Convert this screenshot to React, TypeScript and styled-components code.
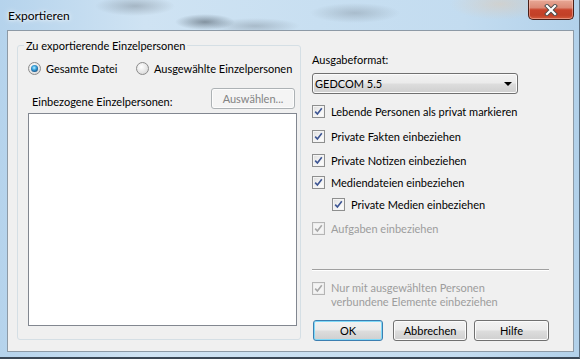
import React from 'react';
import styled, { createGlobalStyle } from 'styled-components';

const Global = createGlobalStyle`
  html, body { margin: 0; padding: 0; background: #ffffff; }
  body { font-family: Lato, "Liberation Sans", sans-serif; font-size: 11px; color: #000; }
  * { box-sizing: border-box; }
`;

const Window = styled.div`
  width: 580px;
  height: 359px;
  display: flex;
  flex-direction: column;
  overflow: hidden;
  border-right: 1px solid #5d6f80;
  border-bottom: 2px solid #3b4856;
  background:
    radial-gradient(ellipse 40px 10px at 135px 6px, rgba(90, 100, 110, 0.35), transparent),
    radial-gradient(ellipse 30px 8px at 205px 22px, rgba(40, 50, 60, 0.45), transparent),
    radial-gradient(ellipse 45px 8px at 255px 26px, rgba(90, 100, 110, 0.3), transparent),
    radial-gradient(ellipse 45px 10px at 355px 13px, rgba(100, 110, 120, 0.3), transparent),
    radial-gradient(ellipse 50px 16px at 500px 4px, rgba(230, 200, 170, 0.45), transparent),
    linear-gradient(90deg, #b5d3ec 0%, #cfe3f3 25%, #c8dff1 55%, #c3dcf0 80%, #b2d1ea 100%);
`;

const TitleBar = styled.div`
  height: 30px;
  flex: none;
  display: flex;
  align-items: flex-start;
  justify-content: space-between;
  padding-left: 8px;
  padding-right: 5px;
`;

const Title = styled.span`
  margin-top: 8px;
  font-size: 12px;
  line-height: 15px;
  color: #000;
  text-shadow: 0 0 6px rgba(255, 255, 255, 0.95), 0 0 3px rgba(255, 255, 255, 0.9);
`;

const CloseButton = styled.div`
  width: 46px;
  height: 20px;
  border: 1px solid #4a1f18;
  border-top: none;
  border-radius: 0 0 5px 5px;
  background: linear-gradient(180deg, #e7a896 0%, #dc8a76 40%, #c8432b 52%, #c24027 80%, #d35b3c 100%);
  box-shadow: inset 0 0 0 1px rgba(255, 210, 200, 0.45);
  display: flex;
  align-items: center;
  justify-content: center;
`;

const Panel = styled.div`
  margin-left: 7px;
  width: 567px;
  height: 322px;
  flex: none;
  border: 1px solid #8d9aa6;
  background: #f0f0f0;
  display: flex;
  padding: 7px 24px 10px 9px;
`;

const GroupBox = styled.fieldset`
  margin: 0 0 1px 0;
  width: 284px;
  min-width: 0;
  flex: none;
  border: 1px solid #d5dfe5;
  border-radius: 3px;
  padding: 0 3px 13px 10px;
  display: flex;
  flex-direction: column;
`;

const GroupLegend = styled.legend`
  padding: 0 2px;
  margin-left: -4px;
  line-height: 15px;
`;

const RadioRow = styled.div`
  margin-top: 8px;
  display: grid;
  grid-template-columns: 108px auto;
  height: 15px;
`;

const RadioOption = styled.label`
  display: flex;
  align-items: center;
  gap: 5px;
  line-height: 15px;
  white-space: nowrap;
`;

const RadioCircle = styled.span<{ $checked?: boolean }>`
  width: 13px;
  height: 13px;
  border-radius: 50%;
  border: 1px solid #8b8b8b;
  background: radial-gradient(circle at 40% 35%, #ffffff 0%, #e6e6e6 55%, #cfcfcf 100%);
  display: flex;
  align-items: center;
  justify-content: center;
  flex: none;
  &::after {
    content: '';
    display: ${(p) => (p.$checked ? 'block' : 'none')};
    width: 7px;
    height: 7px;
    border-radius: 50%;
    background: radial-gradient(circle at 45% 40%, #bff0ff 0%, #3da7e0 35%, #135288 75%, #0c355c 100%);
  }
`;

const ListHeader = styled.div`
  margin-top: 12px;
  display: flex;
  justify-content: space-between;
  align-items: flex-end;
`;

const FieldLabel = styled.span<{ $indent?: number }>`
  padding-left: ${(p) => p.$indent ?? 0}px;
  line-height: 15px;
  white-space: nowrap;
`;

const PushButton = styled.button<{ $width: number; $default?: boolean }>`
  width: ${(p) => p.$width}px;
  height: 21px;
  padding: 0;
  font: inherit;
  font-size: 11px;
  line-height: 15px;
  color: #000;
  border: 1px solid ${(p) => (p.$default ? '#3c7fb1' : '#707070')};
  border-radius: 3px;
  background: linear-gradient(180deg, #f2f2f2 0%, #ebebeb 48%, #dddddd 52%, #cfcfcf 100%);
  box-shadow: inset 0 0 0 1px ${(p) => (p.$default ? '#7fd9f8' : '#fbfbfb')};
  &:disabled {
    color: #838383;
    border-color: #adb2b5;
    background: #f4f4f4;
    box-shadow: inset 0 0 0 1px #fcfcfc;
  }
`;

const ListBox = styled.div`
  margin-top: 4px;
  flex: 1;
  border: 1px solid #828790;
  background: #ffffff;
`;

const RightColumn = styled.div`
  margin-left: 11px;
  width: 237px;
  flex: none;
  display: flex;
  flex-direction: column;
  padding-top: 14px;
`;

const ComboBox = styled.div`
  margin-top: 6px;
  width: 206px;
  height: 21px;
  border: 1px solid #707070;
  border-radius: 3px;
  background: linear-gradient(180deg, #f2f2f2 0%, #ebebeb 48%, #dddddd 52%, #cfcfcf 100%);
  box-shadow: inset 0 0 0 1px #fbfbfb;
  display: flex;
  align-items: center;
  justify-content: space-between;
  padding: 0 5px 0 2px;
  line-height: 15px;
`;

const ComboArrow = styled.span`
  width: 0;
  height: 0;
  border-left: 4px solid transparent;
  border-right: 4px solid transparent;
  border-top: 4px solid #000;
`;

const CheckRow = styled.label<{ $gap: number; $indent?: number; $disabled?: boolean }>`
  margin-top: ${(p) => p.$gap}px;
  margin-left: ${(p) => p.$indent ?? 0}px;
  display: flex;
  align-items: flex-start;
  gap: 6px;
  line-height: 15px;
  color: ${(p) => (p.$disabled ? '#9d9d9d' : '#000')};
`;

const CheckText = styled.span<{ $lines?: boolean }>`
  line-height: ${(p) => (p.$lines ? '14px' : '15px')};
`;

const CheckBoxFrame = styled.span<{ $disabled?: boolean }>`
  margin-top: 1px;
  width: 13px;
  height: 13px;
  flex: none;
  border: 1px solid ${(p) => (p.$disabled ? '#b5b5b5' : '#8e8f8f')};
  background: ${(p) =>
    p.$disabled
      ? '#f4f4f4'
      : 'linear-gradient(135deg, #dcdcdc 0%, #f0f0f0 45%, #ffffff 100%)'};
  box-shadow: inset 0 0 0 1px ${(p) => (p.$disabled ? '#ececec' : '#f4f4f4')};
  display: flex;
  align-items: center;
  justify-content: center;
`;

const Footer = styled.div`
  margin-top: auto;
  display: flex;
  flex-direction: column;
`;

const Separator = styled.div`
  height: 1px;
  background: #a0a0a0;
  box-shadow: 0 1px 0 #ffffff;
`;

const ButtonRow = styled.div`
  margin-top: 11px;
  display: flex;
  padding-left: 1px;
`;

const ButtonSlot = styled.div<{ $gap: number; $right?: number }>`
  margin-left: ${(p) => p.$gap}px;
  margin-right: ${(p) => p.$right ?? 0}px;
`;

function CheckBox({ disabled }: { disabled?: boolean }) {
  return (
    <CheckBoxFrame $disabled={disabled}>
      <svg width="9" height="9" viewBox="0 0 9 9">
        <path
          d="M1.2 4.6 L3.4 7 L7.8 1.3"
          fill="none"
          stroke={disabled ? '#a8a8a8' : '#3d5593'}
          strokeWidth="1.6"
        />
      </svg>
    </CheckBoxFrame>
  );
}

function Check({
  children,
  gap,
  indent,
  disabled,
  lines,
}: {
  children: React.ReactNode;
  gap: number;
  indent?: number;
  disabled?: boolean;
  lines?: boolean;
}) {
  return (
    <CheckRow $gap={gap} $indent={indent} $disabled={disabled}>
      <CheckBox disabled={disabled} />
      <CheckText $lines={lines}>{children}</CheckText>
    </CheckRow>
  );
}

export default function App() {
  return (
    <>
      <Global />
      <Window>
        <TitleBar>
          <Title>Exportieren</Title>
          <CloseButton>
            <svg width="14" height="12" viewBox="0 0 14 12">
              <path d="M3 2 L11 10 M11 2 L3 10" stroke="#4b4b4b" strokeWidth="4" strokeLinecap="square" />
              <path d="M3 2 L11 10 M11 2 L3 10" stroke="#ffffff" strokeWidth="2.2" strokeLinecap="square" />
            </svg>
          </CloseButton>
        </TitleBar>
        <Panel>
          <GroupBox>
            <GroupLegend>Zu exportierende Einzelpersonen</GroupLegend>
            <RadioRow>
              <RadioOption>
                <RadioCircle $checked />
                Gesamte Datei
              </RadioOption>
              <RadioOption>
                <RadioCircle />
                Ausgewählte Einzelpersonen
              </RadioOption>
            </RadioRow>
            <ListHeader>
              <FieldLabel $indent={4}>Einbezogene Einzelpersonen:</FieldLabel>
              <ButtonSlot $gap={0} $right={2}>
                <PushButton $width={84} disabled>
                  Auswählen...
                </PushButton>
              </ButtonSlot>
            </ListHeader>
            <ListBox />
          </GroupBox>
          <RightColumn>
            <FieldLabel>Ausgabeformat:</FieldLabel>
            <ComboBox>
              <span>GEDCOM 5.5</span>
              <ComboArrow />
            </ComboBox>
            <Check gap={10}>Lebende Personen als privat markieren</Check>
            <Check gap={10}>Private Fakten einbeziehen</Check>
            <Check gap={9}>Private Notizen einbeziehen</Check>
            <Check gap={7}>Mediendateien einbeziehen</Check>
            <Check gap={7} indent={20}>
              Private Medien einbeziehen
            </Check>
            <Check gap={9} disabled>
              Aufgaben einbeziehen
            </Check>
            <Footer>
              <Separator />
              <Check gap={11} disabled lines>
                Nur mit ausgewählten Personen
                <br />
                verbundene Elemente einbeziehen
              </Check>
              <ButtonRow>
                <PushButton $width={70} $default>
                  OK
                </PushButton>
                <ButtonSlot $gap={10}>
                  <PushButton $width={74}>Abbrechen</PushButton>
                </ButtonSlot>
                <ButtonSlot $gap={7}>
                  <PushButton $width={75}>Hilfe</PushButton>
                </ButtonSlot>
              </ButtonRow>
            </Footer>
          </RightColumn>
        </Panel>
      </Window>
    </>
  );
}
